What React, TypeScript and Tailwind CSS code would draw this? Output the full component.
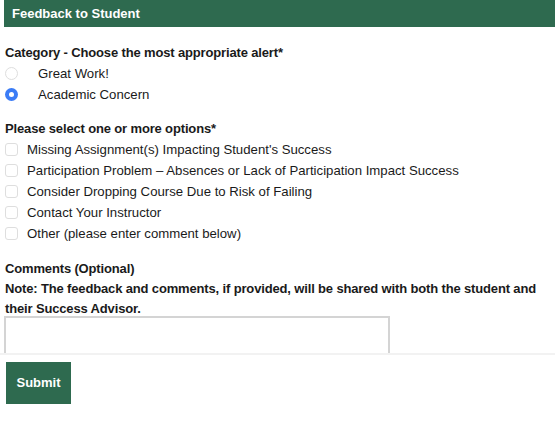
import React from 'react';

const options = [
  "Missing Assignment(s) Impacting Student's Success",
  'Participation Problem – Absences or Lack of Participation Impact Success',
  'Consider Dropping Course Due to Risk of Failing',
  'Contact Your Instructor',
  'Other (please enter comment below)',
];

export default function App() {
  return (
    <div className="w-[555px] h-[421px] bg-white text-[13.2px] text-[#1a1a1a] font-['Liberation_Sans',Arial,sans-serif] overflow-hidden">
      <div className="h-[353px] overflow-hidden">
        <div className="ml-[4px] h-[27px] bg-[#2e6a4f] flex items-center pl-[8px] text-white text-[13px] font-bold">
          Feedback to Student
        </div>
        <div className="pl-[5px] pt-[16px]">
          <div className="font-bold text-[13px] tracking-[-0.15px] leading-[20px]">Category - Choose the most appropriate alert*</div>
          <label className="flex items-center h-[21px]">
            <span className="w-[13px] h-[13px] rounded-full border border-[#dedede] bg-white" />
            <span className="ml-[20px]">Great Work!</span>
          </label>
          <label className="flex items-center h-[21px]">
            <span className="w-[13px] h-[13px] rounded-full bg-[#3b7cf6] flex items-center justify-center">
              <span className="w-[5px] h-[5px] rounded-full bg-white" />
            </span>
            <span className="ml-[20px]">Academic Concern</span>
          </label>

          <div className="font-bold text-[13px] tracking-[-0.15px] leading-[20px] mt-[14px]">Please select one or more options*</div>
          {options.map((o) => (
            <label key={o} className="flex items-center h-[21px]">
              <span className="w-[13px] h-[13px] rounded-[3px] border border-[#dedede] bg-white" />
              <span className="ml-[9px]">{o}</span>
            </label>
          ))}

          <div className="font-bold text-[13px] tracking-[-0.15px] leading-[20px] mt-[15px]">Comments (Optional)</div>
          <div className="font-bold text-[13px] tracking-[-0.15px] leading-[20px]">
            Note: The feedback and comments, if provided, will be shared with both the student and their Success Advisor.
          </div>
          <textarea className="block -ml-[1px] -mt-[3px] w-[386px] h-[80px] border-2 border-[#d4d4d4] resize-none outline-none" />
        </div>
      </div>
      <div className="border-t-2 border-[#f2f2f2] pt-[7px] pl-[6px]">
        <button className="w-[65px] h-[42px] bg-[#2e6a4f] text-white text-[13px] font-bold">Submit</button>
      </div>
    </div>
  );
}
